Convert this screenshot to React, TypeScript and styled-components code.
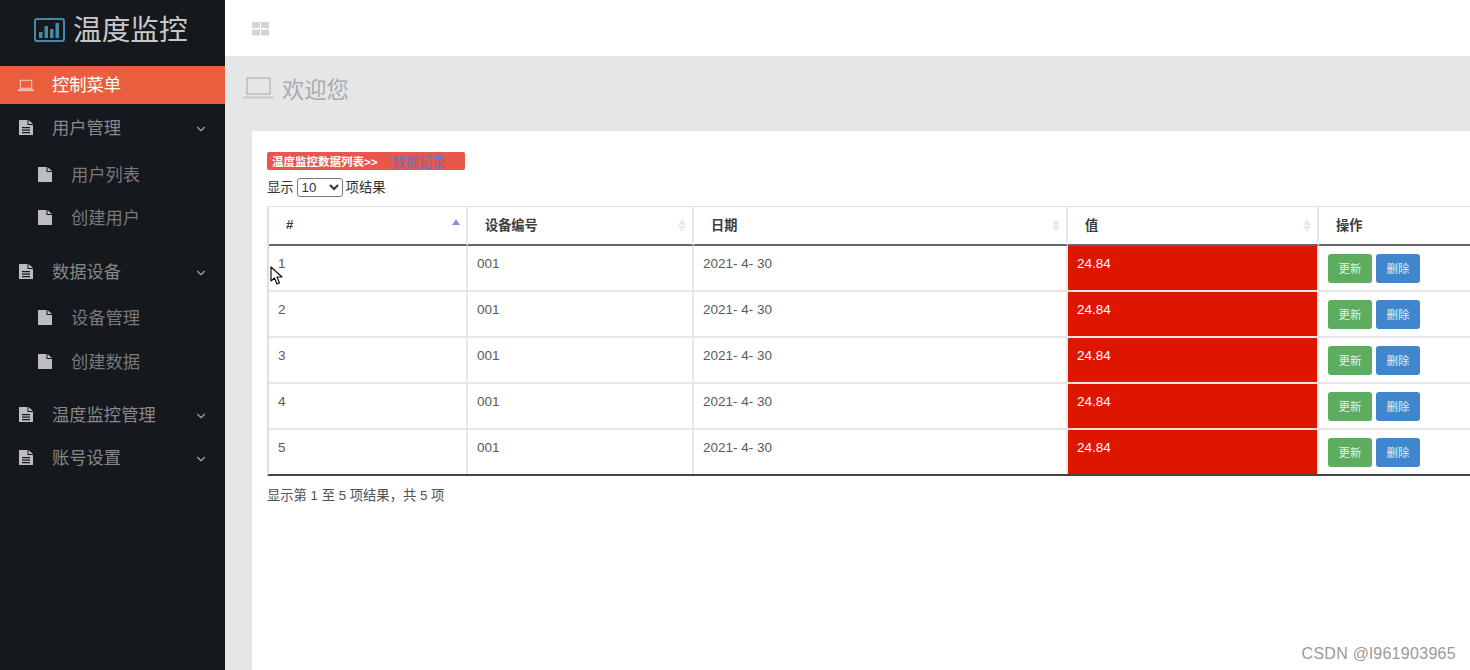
import { FC, ReactNode } from "react";
import styled, { createGlobalStyle } from "styled-components";
import { FiChevronDown } from "react-icons/fi";

const FONT = `"Liberation Sans", "Noto Sans CJK SC", sans-serif`;

const GlobalStyle = createGlobalStyle`
  html, body {
    margin: 0;
    padding: 0;
    height: 100%;
    overflow: hidden;
    background: #fff;
    font-family: ${FONT};
  }
`;

const Shell = styled.div`
  position: relative;
  width: 1470px;
  height: 670px;
  display: flex;
  overflow: hidden;
`;

const Sidebar = styled.aside`
  width: 225px;
  flex-shrink: 0;
  background: #15181c;
  color: #8f9193;
`;
const Brand = styled.div`
  height: 66px;
  box-sizing: border-box;
  padding: 8px 0 0 34px;
  display: flex;
  align-items: flex-start;
  gap: 8px;
  font-size: 28.7px;
  line-height: 44px;
  color: #c6c8c8;
`;
const BrandIcon = styled.svg`
  width: 31px;
  height: 26px;
  margin-top: 9px;
`;
const ActiveItem = styled.div`
  height: 38px;
  box-sizing: border-box;
  padding: 0 0 4px 18px;
  display: flex;
  align-items: center;
  background: #e95f3e;
  color: #fff;
  font-size: 17.3px;
`;
const ActiveIcon = styled.svg`
  width: 16px;
  height: 13px;
  margin: 4px 18px 0 0;
`;
const NavRow = styled.div<{ $gap: number; $sub?: boolean }>`
  height: 40px;
  margin-top: ${(p) => p.$gap}px;
  display: flex;
  align-items: center;
  padding-left: ${(p) => (p.$sub ? 38 : 19)}px;
  font-size: 17.3px;
  color: ${(p) => (p.$sub ? "#77797b" : "#87898b")};
`;
const NavLabel = styled.span`
  flex: 1;
  margin-left: 19px;
`;
const NavIcon = styled.svg`
  width: 14px;
  height: 15px;
  margin-top: 2px;
  fill: #bcbdbd;
`;
const Caret = styled(FiChevronDown)`
  width: 14px;
  height: 14px;
  margin: 5px 17px 0 0;
  color: #a2a4a5;
`;

const Main = styled.main`
  flex: 1;
  min-width: 0;
  display: flex;
  flex-direction: column;
  background: #e5e6e8;
`;
const TopBar = styled.header`
  height: 56px;
  flex-shrink: 0;
  display: flex;
  align-items: center;
  padding-left: 27px;
  background: #fff;
`;
const GridIcon = styled.svg`
  width: 17px;
  height: 14px;
  margin-top: 1px;
`;
const TitleBand = styled.div`
  height: 75px;
  flex-shrink: 0;
  display: flex;
  align-items: center;
  padding: 0 0 11px 18px;
  box-sizing: border-box;
  font-size: 22.3px;
  color: #a9abad;
`;
const TitleIcon = styled.svg`
  width: 31px;
  height: 23px;
  margin-right: 8px;
`;
const Panel = styled.section`
  flex: 1;
  margin-left: 27px;
  padding: 21px 0 0 15px;
  background: #fff;
  overflow: hidden;
`;
const Banner = styled.div`
  width: 198px;
  height: 18px;
  box-sizing: border-box;
  padding: 0 0 1px 5px;
  display: flex;
  align-items: center;
  border-radius: 2px;
  background: #e7574d;
  color: #fff;
  font-size: 11.5px;
  font-weight: 700;
`;
const BannerLink = styled.span`
  margin-left: 14px;
  color: #6a70b8;
  font-size: 13.5px;
  font-weight: 400;
`;
const LengthRow = styled.div`
  height: 36px;
  display: flex;
  align-items: flex-start;
  gap: 3px;
  padding-top: 8px;
  box-sizing: border-box;
  font-size: 13.3px;
  line-height: 19px;
  color: #333;
`;
const LengthSelect = styled.select`
  width: 46px;
  height: 19px;
  padding: 0;
  border: 1px solid #777;
  border-radius: 3px;
  background: #fff;
  font-family: ${FONT};
  font-size: 13.3px;
  color: #333;
`;

const Table = styled.table`
  width: 1240px;
  table-layout: fixed;
  border-collapse: separate;
  border-spacing: 0;
  border-top: 1px solid #e2e2e2;
  border-left: 2px solid #dfdfdf;
  border-bottom: 2px solid #444;
  font-size: 13.5px;
  color: #555;
`;
const HeadCell = styled.th<{ $width: number }>`
  position: relative;
  box-sizing: border-box;
  width: ${(p) => p.$width}px;
  height: 39px;
  padding: 0 0 2px 17px;
  text-align: left;
  font-size: 13.2px;
  font-weight: 700;
  color: #3c3c3c;
  border-right: 2px solid #e8e8e8;
  border-bottom: 2px solid #666;
`;
const SortMark = styled.span<{ $active?: boolean }>`
  position: absolute;
  right: 6px;
  top: 12px;
  width: 0;
  height: 0;
  border-left: 4px solid transparent;
  border-right: 4px solid transparent;
  border-bottom: 6px solid ${(p) => (p.$active ? "#8f8fdc" : "#e9e9e9")};
  &::after {
    content: ${(p) => (p.$active ? "none" : '""')};
    position: absolute;
    left: -4px;
    top: 7px;
    border-left: 4px solid transparent;
    border-right: 4px solid transparent;
    border-top: 6px solid #e9e9e9;
  }
`;
const Cell = styled.td<{ $hot?: boolean }>`
  height: 35px;
  box-sizing: content-box;
  padding: 9px 0 0 9px;
  vertical-align: top;
  line-height: 17px;
  background: ${(p) => (p.$hot ? "#de1600" : "#fff")};
  color: ${(p) => (p.$hot ? "#fff" : "#5a5a5a")};
  border-right: 2px solid #e8e8e8;
  border-bottom: 2px solid #e6e6e6;
  tr:last-child & {
    border-bottom: none;
  }
`;
const ActionCell = styled.td`
  padding: 8px 0 0 9px;
  vertical-align: top;
  border-bottom: 2px solid #e6e6e6;
  tr:last-child & {
    border-bottom: none;
  }
`;
const ActionRow = styled.div`
  display: flex;
  gap: 4px;
`;
const ActionButton = styled.button<{ $tone: "green" | "blue" }>`
  width: 44px;
  height: 29px;
  padding: 0 0 2px;
  border: none;
  border-radius: 3px;
  background: ${(p) => (p.$tone === "green" ? "#5cad5f" : "#3f86cd")};
  color: #e8f0ea;
  font-family: ${FONT};
  font-size: 11.5px;
`;
const Summary = styled.div`
  margin-top: 9px;
  font-size: 13.3px;
  color: #505050;
`;

const Pointer = styled.svg`
  position: absolute;
  left: 270px;
  top: 266px;
  width: 13px;
  height: 20px;
`;
const Watermark = styled.div`
  position: absolute;
  right: 14px;
  bottom: 7px;
  font-size: 16px;
  letter-spacing: 0.3px;
  color: #9a9a9a;
`;

interface NavEntry {
  label: string;
  gap: number;
  sub?: boolean;
}

const NAV: NavEntry[] = [
  { label: "用户管理", gap: 2 },
  { label: "用户列表", gap: 7, sub: true },
  { label: "创建用户", gap: 3, sub: true },
  { label: "数据设备", gap: 14 },
  { label: "设备管理", gap: 6, sub: true },
  { label: "创建数据", gap: 4, sub: true },
  { label: "温度监控管理", gap: 13 },
  { label: "账号设置", gap: 3 },
];

const ROWS = [1, 2, 3, 4, 5];

const Head: FC<{ width: number; active?: boolean; sortable?: boolean; children: ReactNode }> = ({
  width,
  active,
  sortable = true,
  children,
}) => (
  <HeadCell $width={width}>
    {children}
    {sortable && <SortMark $active={active} />}
  </HeadCell>
);

const FileIcon: FC<{ lines?: boolean }> = ({ lines }) => (
  <NavIcon viewBox="0 0 14 15">
    <path d="M0 0 H8.5 V5 H14 V15 H0 Z M9.5 0 L14 4 H9.5 Z" />
    {lines && <path d="M3 7 H11 V8.2 H3 Z M3 9.5 H11 V10.7 H3 Z M3 12 H11 V13.2 H3 Z" fill="#15181c" />}
  </NavIcon>
);

export default function App() {
  return (
    <Shell>
      <GlobalStyle />
      <Sidebar>
        <Brand>
          <BrandIcon viewBox="0 0 31 26">
            <rect x="1" y="2" width="29" height="22" rx="2" fill="none" stroke="#4a88a8" strokeWidth="2" />
            <rect x="5" y="15" width="3.5" height="6" fill="#4a88a8" />
            <rect x="10.5" y="9" width="3.5" height="12" fill="#4a88a8" />
            <rect x="16" y="12" width="3.5" height="9" fill="#4a88a8" />
            <rect x="21.5" y="6" width="3.5" height="15" fill="#4a88a8" />
          </BrandIcon>
          温度监控
        </Brand>
        <ActiveItem>
          <ActiveIcon viewBox="0 0 17 13">
            <rect x="2.5" y="1" width="12" height="8.5" fill="none" stroke="#f3c4b4" strokeWidth="1.2" />
            <rect x="0" y="10.5" width="17" height="2" fill="#f3c4b4" />
          </ActiveIcon>
          控制菜单
        </ActiveItem>
        {NAV.map((item) => (
          <NavRow key={item.label} $gap={item.gap} $sub={item.sub}>
            <FileIcon lines={!item.sub} />
            <NavLabel>{item.label}</NavLabel>
            {!item.sub && <Caret />}
          </NavRow>
        ))}
      </Sidebar>
      <Main>
        <TopBar>
          <GridIcon viewBox="0 0 17 14" fill="#d4d4d4">
            <rect x="0" y="0" width="8" height="6" rx="0.5" />
            <rect x="9" y="0" width="8" height="6" rx="0.5" />
            <rect x="0" y="7.5" width="8" height="6" rx="0.5" />
            <rect x="9" y="7.5" width="8" height="6" rx="0.5" />
          </GridIcon>
        </TopBar>
        <TitleBand>
          <TitleIcon viewBox="0 0 31 23">
            <rect x="4" y="1" width="23" height="16" fill="none" stroke="#bcbebf" strokeWidth="1.6" />
            <rect x="0" y="19.5" width="31" height="2" fill="#c8cacb" />
          </TitleIcon>
          欢迎您
        </TitleBand>
        <Panel>
          <Banner>
            温度监控数据列表&gt;&gt;
            <BannerLink>数据记录</BannerLink>
          </Banner>
          <LengthRow>
            显示
            <LengthSelect defaultValue="10">
              <option value="10">10</option>
            </LengthSelect>
            项结果
          </LengthRow>
          <Table>
            <thead>
              <tr>
                <Head width={199} active>#</Head>
                <Head width={226}>设备编号</Head>
                <Head width={374}>日期</Head>
                <Head width={251}>值</Head>
                <Head width={188} sortable={false}>操作</Head>
              </tr>
            </thead>
            <tbody>
              {ROWS.map((n) => (
                <tr key={n}>
                  <Cell>{n}</Cell>
                  <Cell>001</Cell>
                  <Cell>2021- 4- 30</Cell>
                  <Cell $hot>24.84</Cell>
                  <ActionCell>
                    <ActionRow>
                      <ActionButton $tone="green">更新</ActionButton>
                      <ActionButton $tone="blue">删除</ActionButton>
                    </ActionRow>
                  </ActionCell>
                </tr>
              ))}
            </tbody>
          </Table>
          <Summary>显示第 1 至 5 项结果，共 5 项</Summary>
        </Panel>
      </Main>
      <Pointer viewBox="0 0 13 20">
        <path d="M1 1 L1 15 L4.5 12 L7 18 L9.5 17 L7 11 L12 11 Z" fill="#fff" stroke="#111" strokeWidth="1.2" strokeLinejoin="round" />
      </Pointer>
      <Watermark>CSDN @l961903965</Watermark>
    </Shell>
  );
}
